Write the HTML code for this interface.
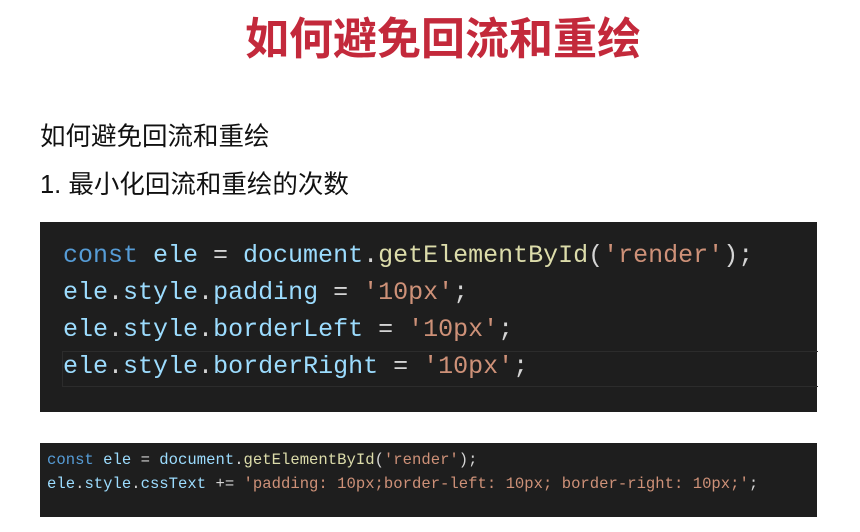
<!DOCTYPE html>
<html><head><meta charset="utf-8"><style>
html,body{margin:0;padding:0;background:#fff;width:860px;height:532px;overflow:hidden;position:relative}
.t{position:absolute;left:0;width:886px;text-align:center;top:14px;font:bold 44px/52px "Liberation Sans","Noto Sans CJK SC",sans-serif;color:#c3293b}
.s{position:absolute;left:40px;font:25.5px/30px "Liberation Sans","Noto Sans CJK SC",sans-serif;color:#111}
.b{position:absolute;left:40px;width:777px;background:#1e1e1e}
pre{margin:0;font-family:"Liberation Mono",monospace;white-space:pre;color:#9cdcfe}
.k{color:#569cd6}.f{color:#dcdcaa}.s1{color:#ce9178}.w{color:#d4d4d4}
</style></head><body>
<div class="t">如何避免回流和重绘</div>
<div class="s" style="top:122px">如何避免回流和重绘</div>
<div class="s" style="top:170px">1. 最小化回流和重绘的次数</div>
<div class="b" style="top:222px;height:190px">
<div style="position:absolute;left:22px;top:129px;width:755px;height:34px;border:1px solid #2c2c2c;border-right:none"></div>
<pre style="position:absolute;left:23px;top:15px;font-size:25px;line-height:37px"><span class="k">const</span> ele <span class="w">=</span> document<span class="w">.</span><span class="f">getElementById</span><span class="w">(</span><span class="s1">'render'</span><span class="w">);</span>
ele<span class="w">.</span>style<span class="w">.</span>padding <span class="w">=</span> <span class="s1">'10px'</span><span class="w">;</span>
ele<span class="w">.</span>style<span class="w">.</span>borderLeft <span class="w">=</span> <span class="s1">'10px'</span><span class="w">;</span>
ele<span class="w">.</span>style<span class="w">.</span>borderRight <span class="w">=</span> <span class="s1">'10px'</span><span class="w">;</span></pre>
</div>
<div class="b" style="top:443px;height:74px">
<pre style="position:absolute;left:7px;top:5px;font-size:15.6px;line-height:24px"><span class="k">const</span> ele <span class="w">=</span> document<span class="w">.</span><span class="f">getElementById</span><span class="w">(</span><span class="s1">'render'</span><span class="w">);</span>
ele<span class="w">.</span>style<span class="w">.</span>cssText <span class="w">+=</span> <span class="s1">'padding: 10px;border-left: 10px; border-right: 10px;'</span><span class="w">;</span></pre>
</div>
</body></html>
